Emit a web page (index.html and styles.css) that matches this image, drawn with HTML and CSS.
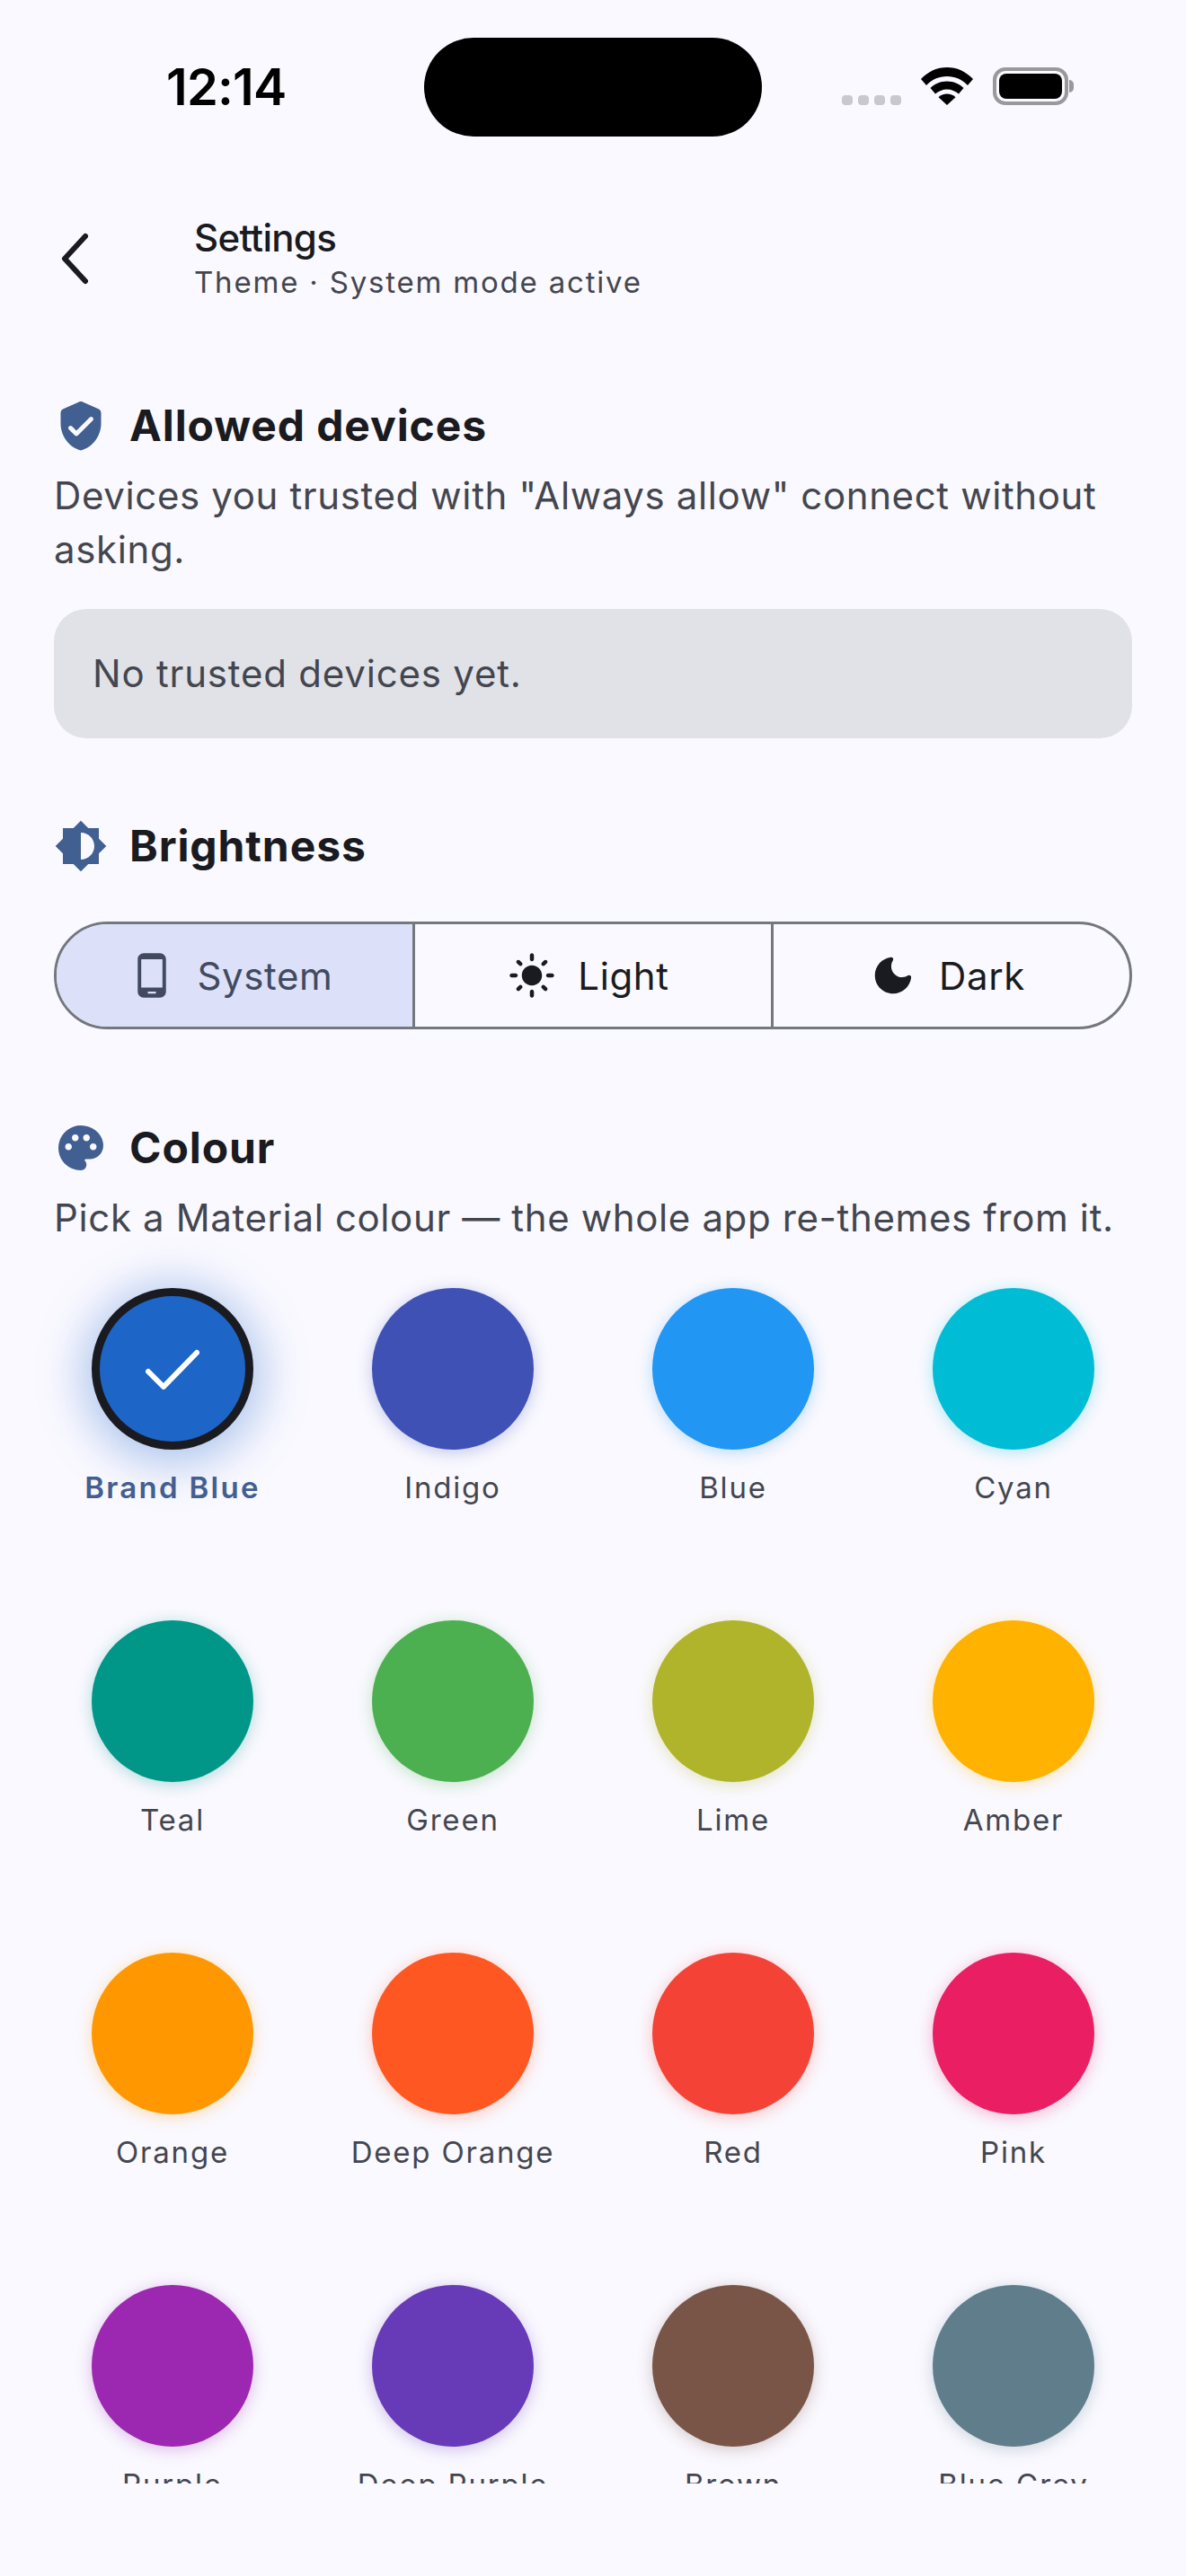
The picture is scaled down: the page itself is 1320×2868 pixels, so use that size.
FILE: index.html
```html
<!DOCTYPE html>
<html lang="en">
<head>
    <meta charset="UTF-8">
    <meta name="viewport" content="width=device-width, initial-scale=1.0">
    <title>Settings</title>
    <link rel="stylesheet" href="styles.css">
</head>
<body>
    <div class="status-bar">
        <span class="status-time">12:14</span>
        <div class="island"></div>
        <div class="status-icons">
            <div class="signal"><i></i><i></i><i></i><i></i></div>
            <svg class="wifi" viewBox="0 0 58 42"><path d="M29 0C18 0 8 4.500 0 13l6 7C12 13.500 20 10 29 10s17 3.500 23 10l6-7C50 4.500 40 0 29 0z"/><path d="M29 15.500c-7 0-13.500 2.700-18.500 7.500l5.500 6.500c3.500-3 8-5 13-5s9.500 2 13 5l5.500-6.500c-5-4.800-11.500-7.500-18.500-7.500z"/><path d="M29 29.500c-3.700 0-7 1.300-9.500 3.700L29 42l9.500-8.800c-2.500-2.400-5.800-3.700-9.500-3.700z"/></svg>
            <div class="battery"><div class="battery-fill"></div></div>
        </div>
    </div>

    <div class="app-bar">
        <svg class="back" viewBox="0 0 32 58"><path d="M28 4 5 29l23 25" fill="none" stroke="#1a1b20" stroke-width="6" stroke-linecap="round" stroke-linejoin="round"/></svg>
        <div class="app-bar-text">
            <div class="app-title">Settings</div>
            <div class="app-subtitle">Theme · System mode active</div>
        </div>
    </div>

    <div class="content">
        <div class="section-head">
            <svg class="section-icon" viewBox="0 0 24 24"><path d="M11.190 1.360l-7 3.110C3.470 4.790 3 5.510 3 6.300V11c0 5.550 3.840 10.740 9 12 5.160-1.260 9-6.450 9-12V6.300c0-.79-.47-1.510-1.190-1.830l-7-3.110c-.51-.23-1.110-.23-1.620 0zM9.290 16.290L6.700 13.700c-.39-.39-.39-1.020 0-1.410.39-.39 1.020-.39 1.410 0L10 14.170l5.880-5.880c.39-.39 1.020-.39 1.410 0 .39.39.39 1.020 0 1.410l-6.590 6.590c-.38.39-1.020.39-1.410 0z"/></svg>
            <h2>Allowed devices</h2>
        </div>
        <p class="section-text">Devices you trusted with "Always allow" connect without asking.</p>
        <div class="empty-card">No trusted devices yet.</div>

        <div class="section-head head-brightness">
            <svg class="section-icon" viewBox="0 0 24 24"><path d="M20 15.310L23.310 12 20 8.690V4h-4.690L12 .69 8.690 4H4v4.690L.69 12 4 15.310V20h4.690L12 23.310 15.310 20H20v-4.690zM12 18V6c3.310 0 6 2.690 6 6s-2.690 6-6 6z"/></svg>
            <h2>Brightness</h2>
        </div>
        <div class="segments">
            <div class="segment selected">
                <svg class="segment-icon" viewBox="0 0 24 24"><path d="M16 1H8C6.340 1 5 2.340 5 4v16c0 1.660 1.340 3 3 3h8c1.660 0 3-1.340 3-3V4c0-1.660-1.340-3-3-3zm-2 20h-4v-1h4v1zm3.250-3H6.750V4h10.500v14z"/></svg>
                <span>System</span>
            </div>
            <div class="segment">
                <svg class="segment-icon" viewBox="0 0 24 24"><path d="M12 7c-2.760 0-5 2.240-5 5s2.240 5 5 5 5-2.240 5-5-2.240-5-5-5zM2 13h2c.55 0 1-.45 1-1s-.45-1-1-1H2c-.55 0-1 .45-1 1s.45 1 1 1zm18 0h2c.55 0 1-.45 1-1s-.45-1-1-1h-2c-.55 0-1 .45-1 1s.45 1 1 1zM11 2v2c0 .55.45 1 1 1s1-.45 1-1V2c0-.55-.45-1-1-1s-1 .45-1 1zm0 18v2c0 .55.45 1 1 1s1-.45 1-1v-2c0-.55-.45-1-1-1s-1 .45-1 1zM5.990 4.580c-.39-.39-1.030-.39-1.410 0-.39.39-.39 1.030 0 1.410l1.060 1.060c.39.39 1.030.39 1.410 0s.39-1.030 0-1.410L5.990 4.580zm12.370 12.370c-.39-.39-1.030-.39-1.410 0-.39.39-.39 1.030 0 1.410l1.060 1.060c.39.39 1.030.39 1.410 0 .39-.39.39-1.030 0-1.410l-1.060-1.060zm1.060-10.960c.39-.39.39-1.030 0-1.410-.39-.39-1.030-.39-1.410 0l-1.060 1.060c-.39.39-.39 1.030 0 1.410s1.030.39 1.410 0l1.060-1.060zM7.050 18.360c.39-.39.39-1.030 0-1.410-.39-.39-1.030-.39-1.410 0l-1.060 1.060c-.39.39-.39 1.030 0 1.410s1.030.39 1.410 0l1.060-1.060z"/></svg>
                <span>Light</span>
            </div>
            <div class="segment">
                <svg class="segment-icon" viewBox="0 0 24 24"><path d="M11.010 3.050C6.510 3.540 3 7.360 3 12c0 4.970 4.030 9 9 9 4.630 0 8.450-3.500 8.950-8 .09-.79-.78-1.420-1.540-.95-.84.54-1.840.85-2.910.85-2.980 0-5.400-2.420-5.400-5.400 0-1.060.31-2.060.84-2.900.45-.72-.1-1.630-.93-1.550z"/></svg>
                <span>Dark</span>
            </div>
        </div>

        <div class="section-head head-colour">
            <svg class="section-icon" viewBox="0 0 24 24"><path d="M12 2C6.490 2 2 6.490 2 12s4.490 10 10 10c1.380 0 2.500-1.120 2.500-2.500 0-.61-.23-1.200-.64-1.670-.08-.1-.13-.21-.13-.33 0-.28.22-.5.5-.5H16c3.310 0 6-2.690 6-6 0-4.960-4.490-9-10-9zm5.500 11c-.83 0-1.500-.67-1.500-1.500s.67-1.500 1.500-1.500 1.500.67 1.500 1.500-.67 1.500-1.500 1.500zm-3-4c-.83 0-1.500-.67-1.500-1.500S13.670 6 14.500 6s1.500.67 1.500 1.500S15.330 9 14.500 9zM5 11.500c0-.83.67-1.500 1.500-1.500s1.500.67 1.500 1.500S7.330 13 6.500 13 5 12.330 5 11.500zm6-4c0 .83-.67 1.500-1.500 1.500S8 8.330 8 7.500 8.670 6 9.500 6s1.500.67 1.500 1.500z"/></svg>
            <h2>Colour</h2>
        </div>
        <p class="section-text">Pick a Material colour — the whole app re-themes from it.</p>

        <div class="swatches">
            <div class="swatch selected">
                <div class="dot dot-brand">
                    <svg class="check" viewBox="0 0 60 46"><path d="M3 26l17 17L57 5" fill="none" stroke="#fff" stroke-width="6" stroke-linecap="round" stroke-linejoin="round"/></svg>
                </div>
                <div class="swatch-name">Brand Blue</div>
            </div>
            <div class="swatch"><div class="dot dot-indigo"></div><div class="swatch-name">Indigo</div></div>
            <div class="swatch"><div class="dot dot-blue"></div><div class="swatch-name">Blue</div></div>
            <div class="swatch"><div class="dot dot-cyan"></div><div class="swatch-name">Cyan</div></div>
            <div class="swatch"><div class="dot dot-teal"></div><div class="swatch-name">Teal</div></div>
            <div class="swatch"><div class="dot dot-green"></div><div class="swatch-name">Green</div></div>
            <div class="swatch"><div class="dot dot-lime"></div><div class="swatch-name">Lime</div></div>
            <div class="swatch"><div class="dot dot-amber"></div><div class="swatch-name">Amber</div></div>
            <div class="swatch"><div class="dot dot-orange"></div><div class="swatch-name">Orange</div></div>
            <div class="swatch"><div class="dot dot-deep-orange"></div><div class="swatch-name">Deep Orange</div></div>
            <div class="swatch"><div class="dot dot-red"></div><div class="swatch-name">Red</div></div>
            <div class="swatch"><div class="dot dot-pink"></div><div class="swatch-name">Pink</div></div>
            <div class="swatch"><div class="dot dot-purple"></div><div class="swatch-name">Purple</div></div>
            <div class="swatch"><div class="dot dot-deep-purple"></div><div class="swatch-name">Deep Purple</div></div>
            <div class="swatch"><div class="dot dot-brown"></div><div class="swatch-name">Brown</div></div>
            <div class="swatch"><div class="dot dot-blue-grey"></div><div class="swatch-name">Blue Grey</div></div>
        </div>
    </div>
</body>
</html>
```

FILE: styles.css
```css
/* General */
html, body {
    height: 100%;
}

body {
    margin: 0;
    overflow: hidden;
    background-color: #faf9ff;
    color: #1a1b20;
    font-family: Inter, "Noto Sans", sans-serif;
}

/* Status bar */
.status-bar {
    display: flex;
    align-items: flex-start;
    height: 210px;
    box-sizing: border-box;
    padding-top: 42px;
}

.status-time {
    width: 131px;
    margin: 25px 0 0 185px;
    font-size: 56px;
    line-height: 60px;
    font-weight: 600;
    color: #000;
    letter-spacing: -0.8px;
    white-space: nowrap;
}

.island {
    width: 376px;
    height: 110px;
    margin-left: 156px;
    border-radius: 55px;
    background-color: #000;
}

.status-icons {
    display: flex;
    align-items: flex-end;
    margin: 33px 0 0 89px;
}

.signal {
    display: flex;
    gap: 6px;
}

.signal i {
    display: block;
    width: 12px;
    height: 11px;
    border-radius: 4px;
    background-color: #c8c8cd;
}

.wifi {
    width: 58px;
    height: 42px;
    margin-left: 22px;
    fill: #000;
}

.battery {
    position: relative;
    box-sizing: border-box;
    width: 84px;
    height: 42px;
    margin-left: 22px;
    padding: 3px;
    border: 4px solid #98989d;
    border-radius: 14px;
}

.battery::after {
    content: "";
    position: absolute;
    top: 10px;
    right: -10px;
    width: 5px;
    height: 14px;
    border-radius: 0 5px 5px 0;
    background-color: #98989d;
}

.battery-fill {
    height: 100%;
    border-radius: 8px;
    background-color: #000;
}

/* App bar */
.app-bar {
    display: flex;
    align-items: center;
    height: 156px;
}

.back {
    width: 32px;
    height: 58px;
    margin-left: 67px;
}

.app-bar-text {
    margin-left: 117px;
}

.app-title {
    font-size: 42px;
    line-height: 52px;
    font-weight: 500;
    letter-spacing: -0.7px;
}

.app-subtitle {
    font-size: 33px;
    line-height: 46px;
    font-weight: 380;
    color: #44464f;
    letter-spacing: 1.8px;
}

/* Content */
.content {
    box-sizing: border-box;
    height: 2399px;
    padding: 78px 60px 0;
    overflow: hidden;
}

.section-head {
    display: flex;
    align-items: center;
    gap: 24px;
    height: 60px;
}

.section-head h2 {
    margin: 0;
    font-size: 48px;
    line-height: 60px;
    font-weight: 700;
    letter-spacing: 0.9px;
}

.section-icon {
    flex: none;
    width: 60px;
    height: 60px;
    fill: #415f91;
}

.section-text {
    margin: 18px 0 0;
    font-size: 42px;
    line-height: 60px;
    font-weight: 370;
    color: #44464f;
    letter-spacing: 0.63px;
}

.empty-card {
    margin-top: 36px;
    height: 144px;
    padding-left: 43px;
    border-radius: 36px;
    line-height: 144px;
    font-size: 42px;
    font-weight: 370;
    color: #44464f;
    letter-spacing: 0.8px;
    background-color: #e1e2e8;
}

.head-brightness {
    margin-top: 90px;
}

/* Brightness selector */
.segments {
    box-sizing: border-box;
    display: flex;
    height: 120px;
    margin-top: 54px;
    border: 3px solid #74777f;
    border-radius: 60px;
    overflow: hidden;
}

.segment {
    flex: 1;
    display: flex;
    align-items: center;
    justify-content: center;
    gap: 24px;
    padding-right: 10px;
    font-size: 42px;
    font-weight: 420;
    letter-spacing: 0.6px;
    border-left: 3px solid #74777f;
}

.segment:first-child {
    border-left: none;
}

.segment.selected {
    background-color: #dce1f9;
    color: #414a5f;
}

.segment-icon {
    width: 54px;
    height: 54px;
    fill: currentColor;
}

.head-colour {
    margin-top: 102px;
}

/* Colour swatches */
.swatches {
    display: grid;
    grid-template-columns: repeat(4, 1fr);
    grid-auto-rows: 322px;
    gap: 48px;
    margin-top: 48px;
}

.swatch {
    display: flex;
    flex-direction: column;
    align-items: center;
}

.dot {
    box-sizing: border-box;
    display: flex;
    align-items: center;
    justify-content: center;
    width: 180px;
    height: 180px;
    border-radius: 50%;
}

.swatch-name {
    margin-top: 20px;
    font-size: 33px;
    line-height: 44px;
    font-weight: 380;
    color: #44464f;
    letter-spacing: 1.8px;
    white-space: nowrap;
}

.swatch.selected .swatch-name {
    color: #415f91;
    font-weight: 600;
    letter-spacing: 2.3px;
}

.check {
    width: 60px;
    height: 46px;
}

.dot-brand { background-color: #1e65c8; border: 9px solid #1a1b20; box-shadow: 0 6px 54px 6px rgba(30, 101, 200, 0.4); }
.dot-indigo { background-color: #3f51b5; box-shadow: 0 3px 18px rgba(63, 81, 181, 0.3); }
.dot-blue { background-color: #2196f3; box-shadow: 0 3px 18px rgba(33, 150, 243, 0.3); }
.dot-cyan { background-color: #00bcd4; box-shadow: 0 3px 18px rgba(0, 188, 212, 0.3); }
.dot-teal { background-color: #009688; box-shadow: 0 3px 18px rgba(0, 150, 136, 0.3); }
.dot-green { background-color: #4caf50; box-shadow: 0 3px 18px rgba(76, 175, 80, 0.3); }
.dot-lime { background-color: #afb42b; box-shadow: 0 3px 18px rgba(175, 180, 43, 0.3); }
.dot-amber { background-color: #ffb300; box-shadow: 0 3px 18px rgba(255, 179, 0, 0.3); }
.dot-orange { background-color: #ff9800; box-shadow: 0 3px 18px rgba(255, 152, 0, 0.3); }
.dot-deep-orange { background-color: #ff5722; box-shadow: 0 3px 18px rgba(255, 87, 34, 0.3); }
.dot-red { background-color: #f44336; box-shadow: 0 3px 18px rgba(244, 67, 54, 0.3); }
.dot-pink { background-color: #e91e63; box-shadow: 0 3px 18px rgba(233, 30, 99, 0.3); }
.dot-purple { background-color: #9c27b0; box-shadow: 0 3px 18px rgba(156, 39, 176, 0.3); }
.dot-deep-purple { background-color: #673ab7; box-shadow: 0 3px 18px rgba(103, 58, 183, 0.3); }
.dot-brown { background-color: #795548; box-shadow: 0 3px 18px rgba(121, 85, 72, 0.3); }
.dot-blue-grey { background-color: #607d8b; box-shadow: 0 3px 18px rgba(96, 125, 139, 0.3); }
```
